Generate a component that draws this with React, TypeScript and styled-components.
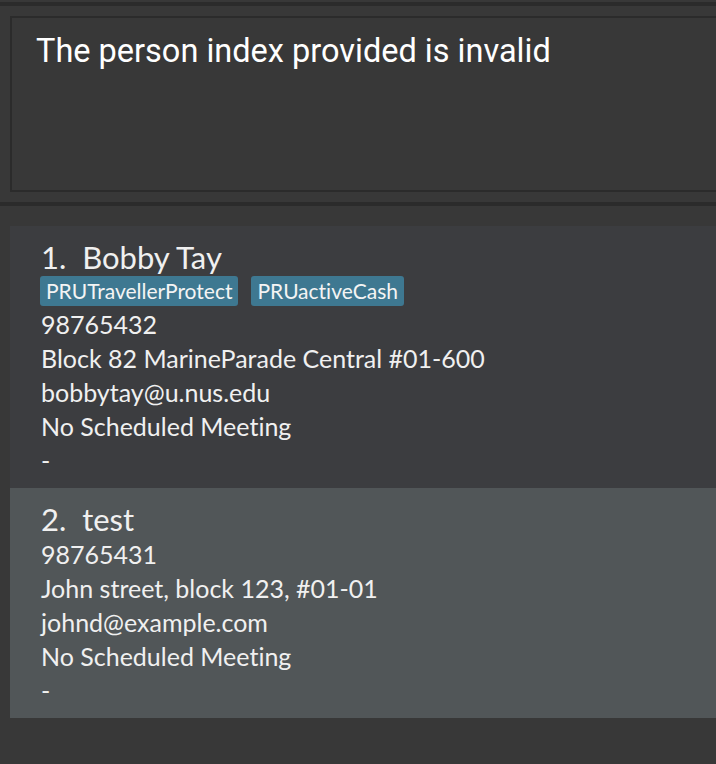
import React from "react";
import styled, { createGlobalStyle } from "styled-components";

const Global = createGlobalStyle`
  html, body { margin: 0; padding: 0; background: #383838; }
  body { font-family: Lato, "Liberation Sans", Arial, sans-serif; overflow: hidden; }
`;

const Page = styled.div`
  width: 716px;
  height: 764px;
  background: #383838;
  display: flex;
  flex-direction: column;
  overflow: hidden;
`;

const Splitter = styled.div<{ $top: number }>`
  height: 4px;
  margin-top: ${(p) => p.$top}px;
  background: #2b2b2b;
  flex: none;
`;

const ResultPane = styled.div`
  padding: 10px 0 10px 10px;
  flex: none;
`;

const ResultBox = styled.div`
  width: 720px;
  height: 176px;
  border: 2px solid #2b2b2b;
  background: #383838;
  color: #ffffff;
  font-family: Roboto, "Liberation Sans", sans-serif;
  font-size: 32.5px;
  padding: 14px 24px;
  box-sizing: border-box;
`;

const ListPane = styled.div`
  padding: 20px 0 0 10px;
  display: flex;
  flex-direction: column;
`;

const Card = styled.div<{ $alt?: boolean }>`
  background: ${(p) => (p.$alt ? "#515658" : "#3c3d40")};
  padding: 13px 30px 11px 31px;
  display: flex;
  flex-direction: column;
  color: #f0f0f0;
  font-family: Lato, "Liberation Sans", sans-serif;
  font-variant-ligatures: none;
`;

const Name = styled.div`
  font-size: 31px;
  line-height: 36px;
  white-space: pre;
`;

const Tags = styled.div`
  display: flex;
  gap: 13px;
  margin: 1px 0 1px -1px;
`;

const Tag = styled.span`
  background: #3e7891;
  color: #f4f4f4;
  border-radius: 3px;
  font-size: 21px;
  line-height: 30px;
  padding: 0 6px;
`;

const Line = styled.div`
  font-size: 25px;
  line-height: 34px;
  &:first-of-type {
    margin-top: 1px;
  }
`;

type Person = {
  name: string;
  tags: string[];
  phone: string;
  address: string;
  email: string;
  meeting: string;
  note: string;
};

const people: Person[] = [
  {
    name: "Bobby Tay",
    tags: ["PRUTravellerProtect", "PRUactiveCash"],
    phone: "98765432",
    address: "Block 82 MarineParade Central #01-600",
    email: "bobbytay@u.nus.edu",
    meeting: "No Scheduled Meeting",
    note: "-",
  },
  {
    name: "test",
    tags: [],
    phone: "98765431",
    address: "John street, block 123, #01-01",
    email: "johnd@example.com",
    meeting: "No Scheduled Meeting",
    note: "-",
  },
];

export default function App() {
  return (
    <Page>
      <Global />
      <Splitter $top={2} />
      <ResultPane>
        <ResultBox>The person index provided is invalid</ResultBox>
      </ResultPane>
      <Splitter $top={0} />
      <ListPane>
        {people.map((p, i) => (
          <Card key={p.name} $alt={i % 2 === 1}>
            <Name>{`${i + 1}.  ${p.name}`}</Name>
            {p.tags.length > 0 && (
              <Tags>
                {p.tags.map((t) => (
                  <Tag key={t}>{t}</Tag>
                ))}
              </Tags>
            )}
            <Line>{p.phone}</Line>
            <Line>{p.address}</Line>
            <Line>{p.email}</Line>
            <Line>{p.meeting}</Line>
            <Line>{p.note}</Line>
          </Card>
        ))}
      </ListPane>
    </Page>
  );
}
